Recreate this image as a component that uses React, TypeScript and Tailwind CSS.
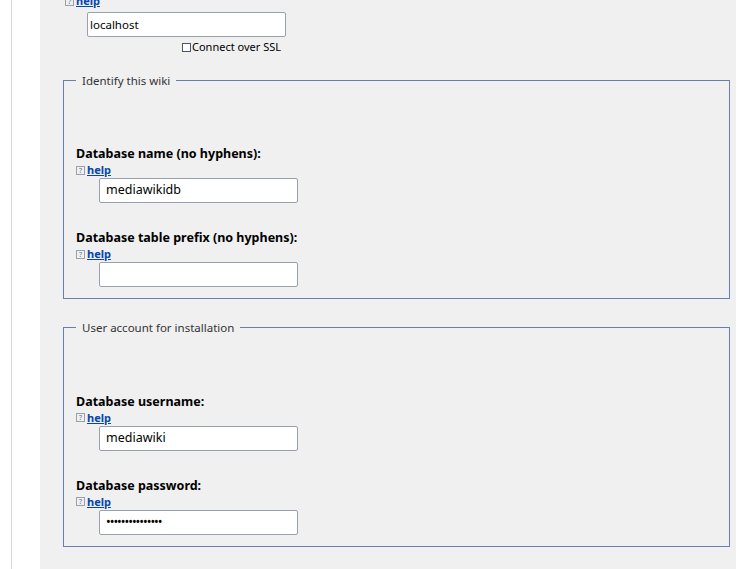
const font = { fontFamily: '"Noto Sans", "DejaVu Sans", sans-serif' };

function Help() {
  return (
    <div className="flex items-center gap-[2px] text-[11px] leading-[14px]">
      <span className="inline-flex h-[9px] w-[9px] items-center justify-center border border-gray-400 text-[7px] leading-none text-gray-500">?</span>
      <a className="font-bold text-[#0645ad] underline">help</a>
    </div>
  );
}

function Field({ label, value, pw }: { label: string; value: string; pw?: boolean }) {
  return (
    <div className="mt-[27px] first:mt-0">
      <div className="text-[12.5px] font-bold leading-[15px] text-black">{label}</div>
      <div className="mt-[2px]"><Help /></div>
      <div className="ml-[23px] mt-[1px] flex h-[25px] w-[199px] items-center rounded-[2px] border border-gray-400 bg-white px-[6px] text-[12.5px] text-black">
        {pw ? <span className="tracking-[-1px]">•••••••••••••••</span> : value}
      </div>
    </div>
  );
}

function Box({ legend, children }: { legend: string; children: React.ReactNode }) {
  return (
    <fieldset className="mr-[6px] ml-[23px] border border-[#6a7fb0] px-[12px] pb-[11px] pt-[30px]">
      <legend className="ml-[0px] px-[6px] text-[11.5px] text-[#333]">{legend}</legend>
      {children}
    </fieldset>
  );
}

export default function App() {
  return (
    <div className="h-[569px] w-[750px] overflow-hidden bg-white" style={font}>
      <div className="ml-[11px] flex h-full items-start border-l border-gray-300">
        <div className="ml-[28px] mt-[-6px] w-[696px] bg-[#f0f0f0] pb-[16px]">
          <div className="ml-[25px]"><Help /></div>
          <div className="ml-[47px] mt-[4px] flex h-[25px] w-[199px] items-center rounded-[2px] border border-gray-400 bg-white px-[2px] text-[11.5px] text-black">localhost</div>
          <div className="ml-[142px] mt-[3px] flex items-center gap-[1px] text-[11px] leading-[14px] text-black">
            <span className="h-[9px] w-[9px] border border-gray-600 bg-white" />Connect over SSL
          </div>
          <div className="mt-[18px]">
            <Box legend="Identify this wiki">
              <Field label="Database name (no hyphens):" value="mediawikidb" />
              <Field label="Database table prefix (no hyphens):" value="" />
            </Box>
          </div>
          <div className="mt-[20px]">
            <Box legend="User account for installation">
              <Field label="Database username:" value="mediawiki" />
              <Field label="Database password:" value="" pw />
            </Box>
          </div>
          <div className="mt-[22px] flex justify-center gap-[10px] pr-[10px] text-[12px] text-black">
            <button className="h-[20px] rounded-[2px] border border-gray-400 bg-[#f5f5f5] px-[3px]">← Back</button>
            <button className="h-[20px] rounded-[2px] border border-gray-400 bg-[#f5f5f5] px-[3px]">Continue →</button>
          </div>
        </div>
      </div>
    </div>
  );
}
